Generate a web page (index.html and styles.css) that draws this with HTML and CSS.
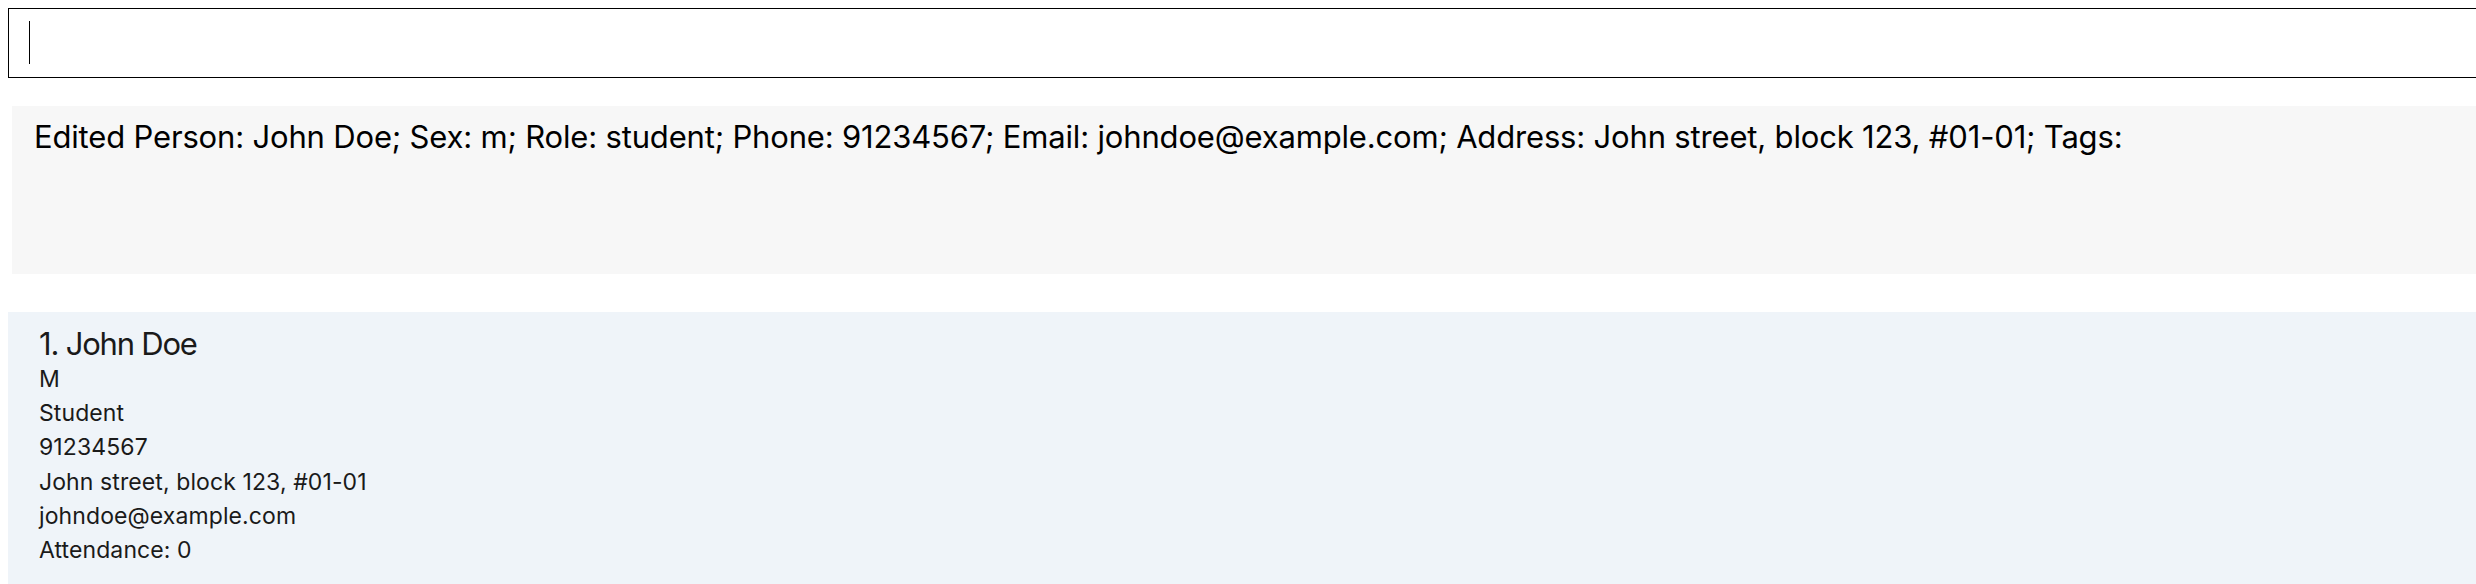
FILE: index.html
```html
<!DOCTYPE html>
<html>
<head>
<meta charset="utf-8">
<link rel="stylesheet" href="styles.css">
</head>
<body>
<div class="command-box"><span class="caret"></span></div>
<div class="result-box">Edited Person: John Doe; Sex: m; Role: student; Phone: 91234567; Email: johndoe@example.com; Address: John street, block 123, #01-01; Tags:</div>
<div class="person-card">
  <div class="name">1. John Doe</div>
  <div class="field">M</div>
  <div class="field">Student</div>
  <div class="field">91234567</div>
  <div class="field">John street, block 123, #01-01</div>
  <div class="field">johndoe@example.com</div>
  <div class="field">Attendance: 0</div>
</div>
</body>
</html>
```
FILE: styles.css
```css
html, body {
  margin: 0;
  padding: 0;
  background: #ffffff;
  overflow: hidden;
}
body {
  font-family: Inter, "Noto Sans", sans-serif;
  width: 2476px;
  height: 584px;
}
.command-box {
  box-sizing: border-box;
  margin: 8px 0 0 8px;
  height: 70px;
  border: 1px solid #000;
  border-right: none;
  padding: 12px 0 0 20px;
}
.caret {
  display: block;
  width: 1px;
  height: 43px;
  background: #000;
}
.result-box {
  box-sizing: border-box;
  margin: 28px 0 0 12px;
  height: 168px;
  background: #f7f7f7;
  padding: 12px 0 0 22px;
  font-size: 31px;
  letter-spacing: -0.17px;
  color: #000;
  white-space: nowrap;
}
.person-card {
  box-sizing: border-box;
  margin: 38px 0 0 8px;
  height: 280px;
  background: #eff4f9;
  padding: 13px 0 0 31px;
  color: #1a1a1a;
}
.name {
  font-size: 31px;
  letter-spacing: -1.2px;
}
.field {
  font-size: 23px;
  line-height: 34.2px;
  letter-spacing: 0.1px;
}
```
